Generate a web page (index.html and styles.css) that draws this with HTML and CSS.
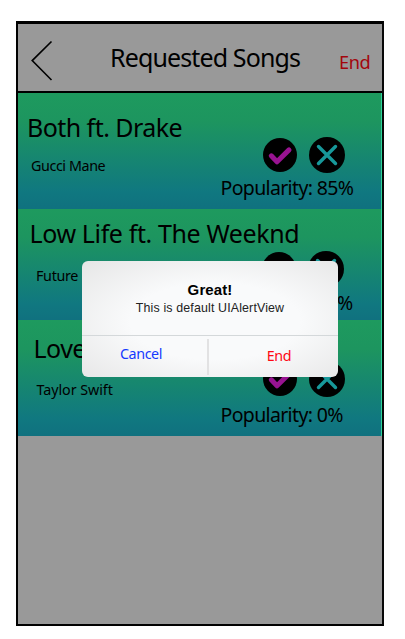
FILE: index.html
```html
<!DOCTYPE html>
<html lang="en">
<head>
<meta charset="utf-8">
<title>Requested Songs</title>
<link rel="stylesheet" href="styles.css">
</head>
<body>
<svg width="0" height="0" class="defs">
  <symbol id="check" viewBox="0 0 34 34"><circle cx="17" cy="17" r="17"/><path d="M8.3 17.8 L14 23.8 L26 11.9" fill="none" stroke="#981391" stroke-width="5" stroke-linecap="round" stroke-linejoin="round"/></symbol>
  <symbol id="cross" viewBox="0 0 36 36"><circle cx="18" cy="18" r="18"/><path d="M9.5 9.5 L26.5 26.5 M26.5 9.5 L9.5 26.5" fill="none" stroke="#17989a" stroke-width="3.4" stroke-linecap="round"/></symbol>
</svg>
<main class="phone">
  <header class="bar">
    <svg class="back" width="22" height="42" viewBox="0 0 22 42"><path d="M20.5 1.5 L1.2 20.6 L20.5 40" fill="none" stroke="#000" stroke-width="1.6"/></svg>
    <h1 class="heading">Requested Songs</h1>
    <span class="end">End</span>
  </header>
  <section class="song song-one">
    <h2 class="title">Both ft. Drake</h2>
    <div class="details">
      <p class="artist">Gucci Mane</p>
      <div class="votes">
        <div class="icons"><svg width="34" height="34"><use href="#check"/></svg><svg width="36" height="36"><use href="#cross"/></svg></div>
        <p class="popularity">Popularity: 85%</p>
      </div>
    </div>
  </section>
  <section class="song song-two">
    <h2 class="title">Low Life ft. The Weeknd</h2>
    <div class="details">
      <p class="artist">Future</p>
      <div class="votes">
        <div class="icons"><svg width="34" height="34"><use href="#check"/></svg><svg width="36" height="36"><use href="#cross"/></svg></div>
        <p class="popularity">%</p>
      </div>
    </div>
  </section>
  <section class="song song-three">
    <h2 class="title">Love</h2>
    <div class="details">
      <p class="artist">Taylor Swift</p>
      <div class="votes">
        <div class="icons"><svg width="34" height="34"><use href="#check"/></svg><svg width="36" height="36"><use href="#cross"/></svg></div>
        <p class="popularity">Popularity: 0%</p>
      </div>
    </div>
  </section>
</main>
<div class="alert">
  <div class="message">
    <strong class="alert-title">Great!</strong>
    <p class="alert-text">This is default UIAlertView</p>
  </div>
  <div class="buttons">
    <span class="cancel">Cancel</span>
    <span class="confirm">End</span>
  </div>
</div>
</body>
</html>
```
FILE: styles.css
```css
* { box-sizing: border-box; margin: 0; padding: 0; }
body { background: #fff; color: #000; font-family: "Noto Sans", sans-serif; height: 639px; overflow: hidden; }
svg { display: block; }
.defs { position: absolute; }
.phone { width: 368px; height: 605px; margin: 21px 0 0 16px; border: 2px solid #000; border-top-width: 3px; border-right-color: #080808; background: #999; }
.bar { display: flex; height: 69px; border-bottom: 2px solid #000; white-space: nowrap; }
.back { margin: 16px 0 0 12.5px; }
.heading { margin: 18.3px 0 0 57.5px; width: 229px; font-size: 25px; line-height: 30px; font-weight: 400; letter-spacing: -0.87px; }
.end { margin-top: 26px; font-size: 18.2px; line-height: 24px; letter-spacing: -0.4px; color: #a3060c; }
.song { background: linear-gradient(#1e9a5e 0%, #1d955f 25%, #107880 85%, #10717f 100%); border-right: 1px solid #2dd49b; white-space: nowrap; }
.song-one { height: 116px; padding: 18.6px 0 0 9px; }
.song-two { height: 111px; padding: 8.8px 0 0 11.5px; }
.song-three { height: 116px; padding: 13.3px 0 0 15.5px; }
.title { font-size: 25px; line-height: 30px; font-weight: 400; letter-spacing: -0.55px; }
.song-two .title { letter-spacing: -0.38px; }
.details { display: flex; }
.artist { font-size: 14.3px; line-height: 20px; letter-spacing: -0.4px; }
.song-one .artist { width: 189.5px; margin: 14.8px 0 0 4px; }
.song-two .artist { width: 184px; margin: 18px 0 0 6.5px; letter-spacing: -0.3px; }
.song-three .artist { width: 184px; margin: 17px 0 0 3px; letter-spacing: -0.05px; }
.song-one .votes { margin-top: -4.6px; }
.song-two .votes { margin-top: 3.2px; }
.song-three .votes { margin-top: -2.3px; }
.icons { display: flex; align-items: center; gap: 12px; margin-left: 42px; }
.popularity { margin-top: 3.2px; font-size: 19.5px; line-height: 24px; letter-spacing: -0.65px; }
.song-two .popularity { margin: 4px 0 0 117px; }
.song-three .popularity { margin-top: 6px; }
.alert { position: absolute; left: 82px; top: 261px; width: 256px; height: 116px; border-radius: 6px; background: radial-gradient(ellipse at 52% 52%, #f9fafb 0 45%, #e6e6e6 100%); text-align: center; white-space: nowrap; }
.message { height: 75px; padding-top: 20px; border-bottom: 1px solid #d4d8da; font-family: "Liberation Sans", sans-serif; }
.alert-title { display: block; font-size: 15px; line-height: 18px; letter-spacing: 0.1px; }
.alert-text { font-size: 12.4px; line-height: 16px; padding-top: 1px; letter-spacing: 0.15px; color: #222; }
.buttons { display: flex; height: 41px; font-size: 14.3px; line-height: 20px; letter-spacing: -0.4px; }
.cancel { width: 127px; height: 36px; margin-top: 3px; padding: 5px 7px 0 0; border-right: 2px solid #e2e2e3; color: #1539ff; }
.confirm { flex: 1; padding: 9.5px 0 0 11px; color: #ff0713; }
```
